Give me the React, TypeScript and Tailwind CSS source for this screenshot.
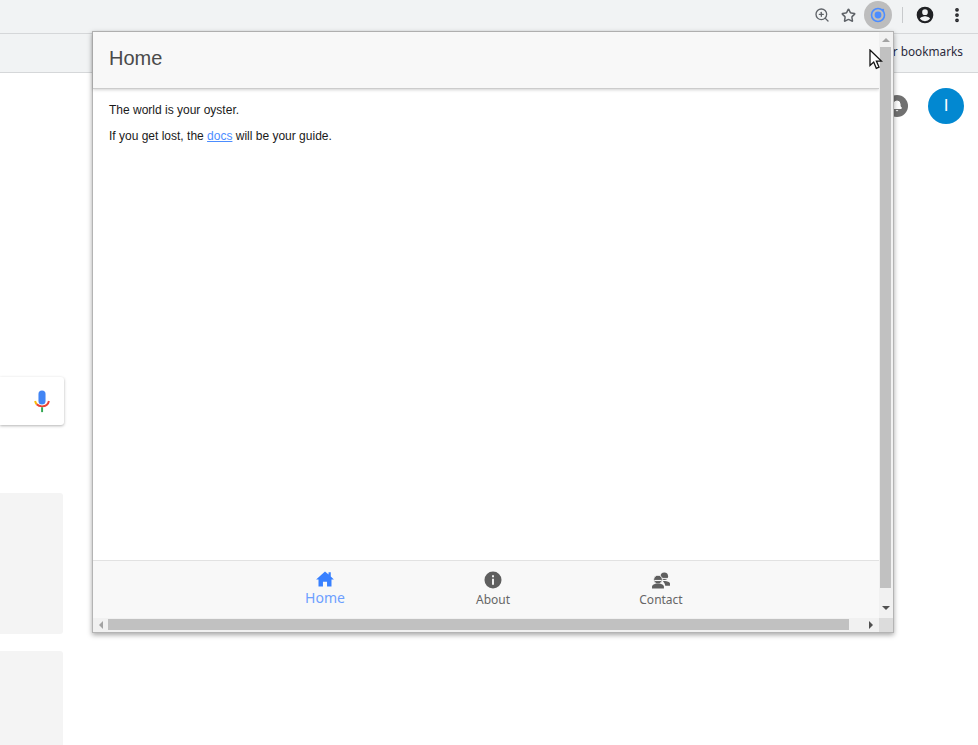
import { Bell, EllipsisVertical, Star, ZoomIn } from "lucide-react";

function ProfileIcon() {
  return (
    <svg width="20" height="20" viewBox="0 0 24 24" fill="#202124">
      <path d="M12 2a10 10 0 1 0 0 20 10 10 0 0 0 0-20zm0 3.2a3.4 3.4 0 1 1 0 6.8 3.4 3.4 0 0 1 0-6.8zm0 14.3a7.6 7.6 0 0 1-6-3c.1-2 4-3.1 6-3.1s5.900 1.100 6 3.100a7.600 7.600 0 0 1-6 3z" />
    </svg>
  );
}

function IonicLogo() {
  return (
    <svg width="18" height="18" viewBox="0 0 18 18" fill="none">
      <circle cx="9" cy="9" r="6.500" stroke="#4c8dff" strokeWidth="1.600" />
      <circle cx="9" cy="9" r="3.400" fill="#4c8dff" />
      <circle cx="14" cy="4" r="1.200" fill="#4c8dff" />
    </svg>
  );
}

function MicIcon() {
  return (
    <svg width="16" height="23" viewBox="0 0 18 26" fill="none">
      <rect x="5" y="0.500" width="8" height="16" rx="4" fill="#4285f4" />
      <path d="M1.200 12.500c.3 1.500.8 2.500 1.800 3.600" stroke="#fbbc05" strokeWidth="2.200" />
      <path d="M3 16.100c1.400 1.500 3.600 2.400 6 2.400 3.900 0 7.100-2.500 7.800-6" stroke="#ea4335" strokeWidth="2.200" />
      <rect x="8" y="19.500" width="2.200" height="5.500" fill="#34a853" />
    </svg>
  );
}

function HomeIcon() {
  return (
    <svg width="18" height="16" viewBox="0 0 20 18" fill="#3880ff">
      <path d="M10 .5 0 9.500h2.700V17.500h5v-5.500h4.600v5.500h5V9.500H20L16.500 6.300V1.500h-2.500v2.500z" />
    </svg>
  );
}

function InfoIcon() {
  return (
    <svg width="18" height="18" viewBox="0 0 19 19" fill="#5f5f5f">
      <path d="M9.500.500a9 9 0 1 0 0 18 9 9 0 0 0 0-18zM8.500 4.600h2v2h-2zm0 3.700h2v6.300h-2z" fillRule="evenodd" />
    </svg>
  );
}

function ContactIcon() {
  return (
    <svg width="20" height="17" viewBox="0 0 20 18" fill="#5f5f5f">
      <circle cx="13.500" cy="4.500" r="4" />
      <path d="M12 9.800c3-.8 6.700.2 7.500 2.200v2.500h-5c-.3-1.800-1.100-3.400-2.500-4.700z" />
      <path d="M11 6.800h6.500" stroke="#f8f8f8" strokeWidth="1" />
      <circle cx="6.800" cy="8" r="4.600" stroke="#f8f8f8" strokeWidth="1" />
      <path d="M.5 17.500v-1.700c0-2.200 3-3.500 6.300-3.500s6.300 1.300 6.300 3.500v1.700z" />
      <path d="M3 9h7.600" stroke="#f8f8f8" strokeWidth="1.200" />
    </svg>
  );
}

function Cursor() {
  return (
    <svg width="14" height="21" viewBox="0 0 14 21">
      <path d="M1 1v15.500l3.700-3.400 2.600 6.200 2.700-1.200-2.600-6h5z" fill="#fff" stroke="#111" strokeWidth="1.300" strokeLinejoin="miter" />
    </svg>
  );
}

function Arrow({ dir }: { dir: "up" | "down" | "left" | "right" }) {
  if (dir === "up") return <div className="h-0 w-0 border-x-[4px] border-b-[4px] border-x-transparent border-b-[#a3a3a3]" />;
  if (dir === "down") return <div className="h-0 w-0 border-x-[4px] border-t-[4px] border-x-transparent border-t-[#505050]" />;
  if (dir === "left") return <div className="h-0 w-0 border-y-[4px] border-r-[4px] border-y-transparent border-r-[#a3a3a3]" />;
  return <div className="h-0 w-0 border-y-[4px] border-l-[4px] border-y-transparent border-l-[#505050]" />;
}

function TabItem({ label, active, icon }: { label: string; active?: boolean; icon: React.ReactNode }) {
  return (
    <div className="flex w-[168px] flex-col items-center font-['Noto_Sans','Open_Sans',sans-serif]">
      <div className={active ? "flex h-[18px] items-end" : "flex h-[20px] items-end"}>{icon}</div>
      {active ? (
        <span className="mt-[1px] text-[14px] leading-[19px] text-[#6d9fff]">{label}</span>
      ) : (
        <span className="mt-[2px] text-[12px] leading-[18px] text-[#666666]">{label}</span>
      )}
    </div>
  );
}

function Popup() {
  return (
    <div className="absolute left-[92px] top-[31px] flex h-[602px] w-[802px] border border-[#b4b4b4] bg-white font-['Liberation_Sans',sans-serif] shadow-[0_2px_5px_rgba(0,0,0,0.35)]">
      <div className="flex w-[786px] flex-col">
        <div className="flex flex-1 flex-col">
          <div className="flex h-[57px] items-center border-b border-[#cccccc] bg-[#f8f8f8] px-4 pb-[4px] shadow-[0_1px_3px_rgba(0,0,0,0.18)]">
            <h1 className="text-[20px] text-[#4a4a4a]">Home</h1>
          </div>
          <div className="flex-1 px-4 pt-[14px] text-[12px] leading-[14px] text-[#1a1a1a]">
            <p>The world is your oyster.</p>
            <p className="mt-3">
              If you get lost, the <a className="text-[#4c8dff] underline">docs</a> will be your guide.
            </p>
          </div>
          <div className="flex h-[58px] justify-center border-t border-[#e2e2e2] bg-[#f8f8f8] pl-[14px] pt-[8px]">
            <TabItem label="Home" active icon={<HomeIcon />} />
            <TabItem label="About" icon={<InfoIcon />} />
            <TabItem label="Contact" icon={<ContactIcon />} />
          </div>
        </div>
        <div className="flex h-[14px] items-start bg-[#f1f1f1] pt-[1px]">
          <div className="flex h-[11px] w-[15px] items-center justify-center">
            <Arrow dir="left" />
          </div>
          <div className="h-[11px] w-[741px] bg-[#c1c1c1]" />
          <div className="flex h-[11px] flex-1 items-center justify-center pl-[14px]">
            <Arrow dir="right" />
          </div>
        </div>
      </div>
      <div className="flex w-[14px] flex-col">
        <div className="flex flex-1 flex-col items-start bg-[#f1f1f1] pl-[1px]">
          <div className="flex h-[15px] w-[11px] items-center justify-center">
            <Arrow dir="up" />
          </div>
          <div className="h-[541px] w-[11px] bg-[#c1c1c1]" />
          <div className="flex w-[11px] flex-1 items-center justify-center pt-[10px]">
            <Arrow dir="down" />
          </div>
        </div>
        <div className="h-[14px] bg-[#dcdcdc]" />
      </div>
    </div>
  );
}

export default function App() {
  return (
    <div className="relative flex h-[745px] w-[978px] flex-col overflow-hidden bg-white">
      <div className="flex h-[33px] shrink-0 items-center justify-end bg-[#f1f3f4] pb-[3px]">
        <ZoomIn size={16} color="#5f6368" strokeWidth={2} />
        <Star size={15} color="#5f6368" strokeWidth={2.400} className="ml-[11px]" />
        <div className="ml-[8px] flex h-[28px] w-[28px] items-center justify-center rounded-full bg-[#bdbdbd]">
          <IonicLogo />
        </div>
        <div className="ml-[10px] h-[16px] w-px bg-[#c8cacc]" />
        <div className="ml-[12px]">
          <ProfileIcon />
        </div>
        <EllipsisVertical size={18} color="#202124" strokeWidth={3} className="ml-[13px] mr-[12px]" />
      </div>
      <div className="flex h-[40px] shrink-0 items-center justify-end border-y border-[#d5d7d9] bg-[#f1f3f4] pb-[2px] pr-[15px] font-['Noto_Sans',sans-serif] text-[11.8px] text-[#2a2a3c]">
        <span>r bookmarks</span>
      </div>
      <div className="flex min-h-0 flex-1 justify-between">
        <div className="flex w-[65px] flex-col pt-[304px]">
          <div className="flex h-[48px] w-[64px] shrink-0 items-center justify-end rounded-r-[3px] bg-white pr-[14px] shadow-[0_1px_3px_rgba(0,0,0,0.3)]">
            <MicIcon />
          </div>
          <div className="mt-[68px] h-[141px] w-[63px] shrink-0 rounded-r-[3px] bg-[#f4f4f4]" />
          <div className="mt-[17px] h-[100px] w-[63px] shrink-0 rounded-tr-[3px] bg-[#f4f4f4]" />
        </div>
        <div className="flex items-start pr-[14px] pt-[15px]">
          <div className="mr-[20px] mt-[7px] flex h-[22px] w-[22px] items-center justify-center rounded-full bg-[#707070]">
            <Bell size={12} color="#fff" fill="#fff" />
          </div>
          <div className="flex h-[36px] w-[36px] items-center justify-center rounded-full bg-[#0288d1] font-['Liberation_Sans',sans-serif] text-[17px] font-light text-white">
            I
          </div>
        </div>
      </div>
      <Popup />
      <div className="absolute left-[869px] top-[49px]">
        <Cursor />
      </div>
    </div>
  );
}
